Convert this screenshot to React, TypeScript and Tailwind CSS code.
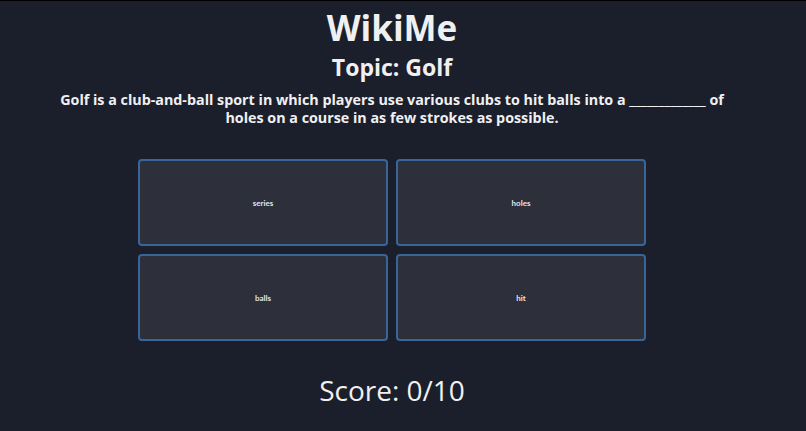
import { useState } from "react";

const options = ["series", "holes", "balls", "hit"];

export default function App() {
  const [score] = useState(0);

  return (
    <div
      className="min-h-screen border-t border-black bg-[#1b1f2b] pr-[22px] text-[#f0f0f2]"
      style={{ fontFamily: '"Open Sans", "Noto Sans", sans-serif' }}
    >
      <div className="flex flex-col items-center pt-[3px]">
        <h1 className="text-[35px] font-bold leading-[48px]">WikiMe</h1>
        <h2 className="text-[23px] font-bold leading-[30px]">Topic: Golf</h2>
        <p className="mt-[9px] w-[690px] text-center text-[14.3px] font-bold leading-[18px]">
          Golf is a club-and-ball sport in which players use various clubs to hit balls into a _____________ of
          holes on a course in as few strokes as possible.
        </p>

        {/* answer choices */}
        <div className="mt-[32px] grid w-[508px] grid-cols-2 gap-[8px]">
          {options.map((opt) => (
            <button
              key={opt}
              type="button"
              className="flex h-[87px] items-center justify-center rounded-[4px] border-2 border-[#3a6599] bg-[#2d2f3b] text-[8px] font-bold text-[#e4e4ea]"
              style={{ fontFamily: "Lato, sans-serif" }}
            >
              {opt}
            </button>
          ))}
        </div>

        <div className="mt-[29px] text-[28px] leading-[40px]">Score: {score}/10</div>
      </div>
    </div>
  );
}
